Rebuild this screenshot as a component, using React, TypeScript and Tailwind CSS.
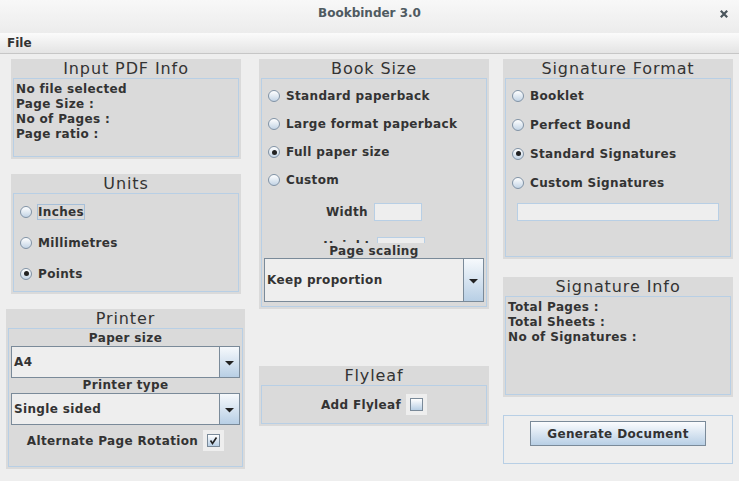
import React from "react";

const Panel = ({
  title,
  className = "",
  innerClassName = "",
  children,
}: {
  title: string;
  className?: string;
  innerClassName?: string;
  children?: React.ReactNode;
}) => (
  <div className={`flex flex-col bg-[#dadada] ${className}`}>
    <div className="h-[19px] shrink-0 text-center text-[16px] leading-[19px] tracking-[0.9px] text-[#333333]">{title}</div>
    <div className={`mx-[2px] mb-[2px] min-h-0 flex-1 border border-[#b8cfe5] ${innerClassName}`}>{children}</div>
  </div>
);

const Radio = ({
  label,
  checked = false,
  focused = false,
  rowClass,
}: {
  label: string;
  checked?: boolean;
  focused?: boolean;
  rowClass: string;
}) => (
  <div className={`flex items-center gap-[5px] pl-[6px] ${rowClass}`}>
    <span className="flex h-[12px] w-[12px] items-center justify-center rounded-full border border-[#8193a6] bg-gradient-to-b from-white to-[#c3d4e5]">
      {checked && <span className="h-[5px] w-[5px] rounded-full bg-[#222222]" />}
    </span>
    <span
      className={`border text-[12px] font-bold leading-[14px] tracking-[0.35px] text-[#333333] ${
        focused ? "border-[#a6bfd8]" : "border-transparent"
      }`}
    >
      {label}
    </span>
  </div>
);

const Checkbox = ({ checked = false }: { checked?: boolean }) => (
  <span className="flex h-[21px] w-[21px] items-center justify-center bg-[#eeeeee]">
    <span className="flex h-[13px] w-[13px] items-center justify-center border border-[#7a8a99] bg-gradient-to-b from-white to-[#b8cfe5]">
      {checked && (
        <svg width="11" height="11" viewBox="0 0 11 11">
          <path d="M2.5 5.5 L4.5 8.5 L8.5 2.5" fill="none" stroke="#222222" strokeWidth="1.6" />
        </svg>
      )}
    </span>
  </span>
);

const Combo = ({ value, className = "" }: { value: string; className?: string }) => (
  <div className={`flex ${className}`}>
    <div className="flex flex-1 items-center border border-[#7a8a99] bg-[#eeeeee] pl-[2px] text-[12px] font-bold tracking-[0.35px] text-[#333333]">
      {value}
    </div>
    <div className="flex w-[20px] items-center justify-center border border-l-0 border-[#7a8a99] bg-gradient-to-b from-[#f6f9fc] to-[#b8cfe5]">
      <svg width="9" height="5" viewBox="0 0 9 5" className="mt-[2px]">
        <path d="M0 0 H9 L4.5 4.5 Z" fill="#222222" />
      </svg>
    </div>
  </div>
);

const Line = ({ children }: { children: React.ReactNode }) => (
  <div className="text-[12px] font-bold leading-[15px] tracking-[0.35px] text-[#333333]">{children}</div>
);

const Label = ({ children, className = "" }: { children: React.ReactNode; className?: string }) => (
  <span className={`text-[12px] font-bold tracking-[0.35px] text-[#333333] ${className}`}>{children}</span>
);

export default function App() {
  return (
    <div className="flex h-[481px] w-[739px] flex-col overflow-hidden bg-[#eeeeee] font-['DejaVu_Sans',sans-serif]">
      {/* window title */}
      <div className="relative flex h-[33px] shrink-0 justify-center bg-gradient-to-b from-[#f8f8f8] to-[#ececec] pt-[6px]">
        <span className="text-[12px] font-bold leading-[15px] text-[#4f5a61]">Bookbinder 3.0</span>
        <svg className="absolute left-[720px] top-[10px]" width="8" height="8" viewBox="0 0 8 8">
          <path d="M0.8 0.8 L7.2 7.2 M7.2 0.8 L0.8 7.2" stroke="#4a555c" strokeWidth="2.2" />
        </svg>
      </div>

      {/* menu */}
      <div className="h-[21px] shrink-0 border-b border-[#c6c6c6] bg-gradient-to-b from-[#fbfbfb] to-[#e4e4e4] pl-[7px] text-[12px] font-bold leading-[20px] text-[#333333]">
        File
      </div>

      <div className="flex gap-[14px] pl-[6px] pt-[5px]">
        {/* left column */}
        <div className="flex w-[239px] flex-col">
          <Panel title="Input PDF Info" className="ml-[5px] h-[100px] w-[230px]" innerClassName="pl-[2px] pt-[3px]">
            <Line>No file selected</Line>
            <Line>Page Size :</Line>
            <Line>No of Pages :</Line>
            <Line>Page ratio :</Line>
          </Panel>

          <Panel title="Units" className="ml-[5px] mt-[15px] h-[120px] w-[230px]" innerClassName="pt-[2px]">
            <Radio label="Inches" focused rowClass="h-[31px]" />
            <Radio label="Millimetres" rowClass="h-[31px]" />
            <Radio label="Points" checked rowClass="h-[31px]" />
          </Panel>

          <Panel title="Printer" className="mt-[15px] h-[160px] w-[239px]" innerClassName="flex flex-col">
            <div className="h-[17px] pt-[1px] text-center text-[12px] font-bold leading-[17px] tracking-[0.35px] text-[#333333]">Paper size</div>
            <Combo value="A4" className="mx-[2px] h-[32px]" />
            <div className="h-[15px] text-center text-[12px] font-bold leading-[15px] tracking-[0.35px] text-[#333333]">Printer type</div>
            <Combo value="Single sided" className="mx-[2px] h-[32px]" />
            <div className="mt-[5px] flex h-[21px] items-center justify-center gap-[5px]">
              <Label>Alternate Page Rotation</Label>
              <Checkbox checked />
            </div>
          </Panel>
        </div>

        {/* middle column */}
        <div className="flex w-[230px] flex-col">
          <Panel title="Book Size" className="h-[250px]" innerClassName="flex flex-col">
            <div className="h-[164px] shrink-0 overflow-hidden pt-[3px]">
              <Radio label="Standard paperback" rowClass="h-[28px]" />
              <Radio label="Large format paperback" rowClass="h-[28px]" />
              <Radio label="Full paper size" checked rowClass="h-[28px]" />
              <Radio label="Custom" rowClass="h-[28px]" />
              <div className="mt-[9px] flex items-center justify-center gap-[6px]">
                <Label>Width</Label>
                <span className="h-[18px] w-[48px] border border-[#b8cfe5] bg-[#eeeeee]" />
              </div>
              <div className="mt-[16px] flex items-center justify-center gap-[6px]">
                <Label>Height</Label>
                <span className="h-[18px] w-[48px] border border-[#b8cfe5] bg-[#eeeeee]" />
              </div>
            </div>
            <div className="h-[15px] pt-[1px] text-center text-[12px] font-bold leading-[15px] tracking-[0.35px] text-[#333333]">Page scaling</div>
            <Combo value="Keep proportion" className="mx-[2px] h-[44px]" />
          </Panel>

          <Panel title="Flyleaf" className="mt-[57px] h-[60px]" innerClassName="flex items-center justify-center gap-[5px]">
            <Label>Add Flyleaf</Label>
            <Checkbox />
          </Panel>
        </div>

        {/* right column */}
        <div className="flex w-[230px] flex-col">
          <Panel title="Signature Format" className="h-[200px]" innerClassName="pt-[2px]">
            <Radio label="Booklet" rowClass="h-[29px]" />
            <Radio label="Perfect Bound" rowClass="h-[29px]" />
            <Radio label="Standard Signatures" checked rowClass="h-[29px]" />
            <Radio label="Custom Signatures" rowClass="h-[29px]" />
            <div className="mx-[11px] mt-[6px] h-[18px] border border-[#b8cfe5] bg-[#eeeeee]" />
          </Panel>

          <Panel title="Signature Info" className="mt-[18px] h-[120px]" innerClassName="pl-[2px] pt-[3px]">
            <Line>Total Pages :</Line>
            <Line>Total Sheets :</Line>
            <Line>No of Signatures :</Line>
          </Panel>

          <div className="mt-[18px] flex h-[49px] justify-center border border-[#b8cfe5] pt-[5px]">
            <button className="h-[25px] w-[176px] border border-[#7a8a99] bg-gradient-to-b from-[#fbfcfe] to-[#b8cfe5] text-[12px] font-bold tracking-[0.35px] text-[#333333]">
              Generate Document
            </button>
          </div>
        </div>
      </div>
    </div>
  );
}
